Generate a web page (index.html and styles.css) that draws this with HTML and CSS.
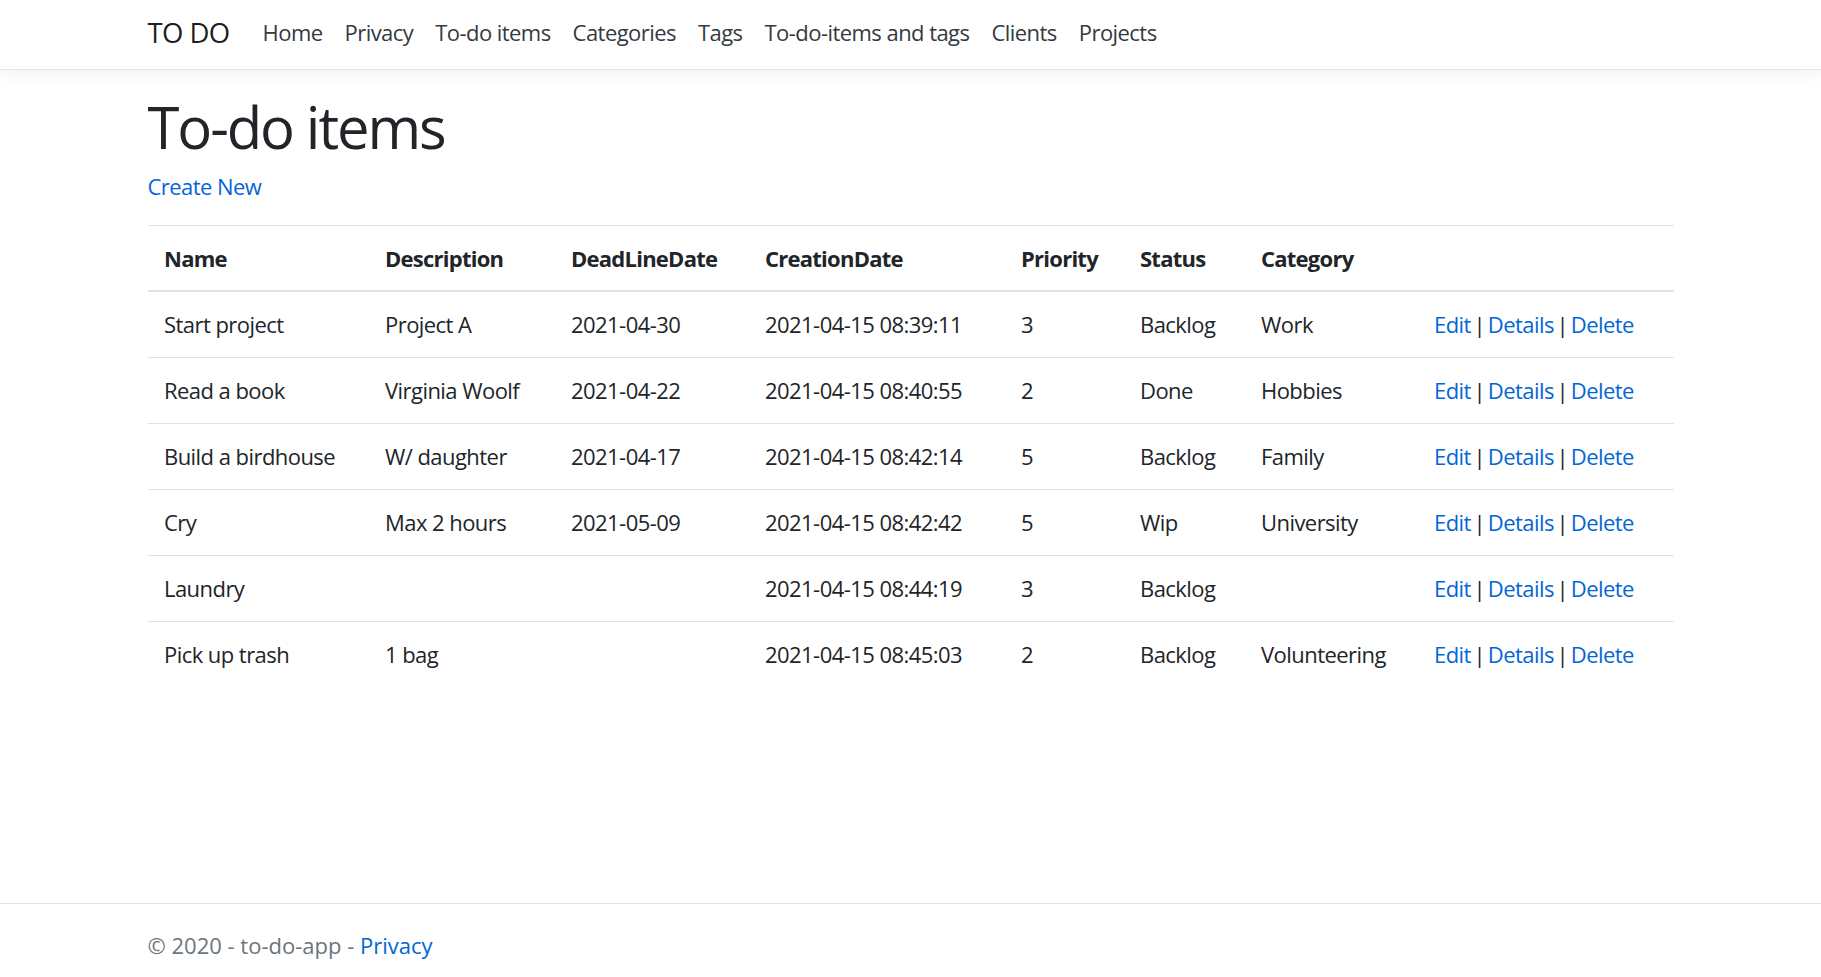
FILE: index.html
```html
<!DOCTYPE html>
<html lang="en">
<head>
<meta charset="utf-8">
<title>To-do items - to-do-app</title>
<link rel="stylesheet" href="styles.css">
</head>
<body>
<header class="navbar">
  <div class="container nav-inner">
    <a class="brand" href="#">TO DO</a>
    <nav class="nav">
      <a class="nav-link" href="#">Home</a>
      <a class="nav-link" href="#">Privacy</a>
      <a class="nav-link" href="#">To-do items</a>
      <a class="nav-link" href="#">Categories</a>
      <a class="nav-link" href="#">Tags</a>
      <a class="nav-link" href="#">To-do-items and tags</a>
      <a class="nav-link" href="#">Clients</a>
      <a class="nav-link" href="#">Projects</a>
    </nav>
  </div>
</header>
<main class="main">
  <div class="container">
    <h1 class="title">To-do items</h1>
    <p class="create"><a href="#">Create New</a></p>
    <table class="table">
      <colgroup>
        <col class="c-name"><col class="c-desc"><col class="c-dead"><col class="c-created"><col class="c-prio"><col class="c-status"><col class="c-cat"><col class="c-actions">
      </colgroup>
      <thead>
        <tr><th>Name</th><th>Description</th><th>DeadLineDate</th><th>CreationDate</th><th>Priority</th><th>Status</th><th>Category</th><th></th></tr>
      </thead>
      <tbody>
        <tr><td>Start project</td><td>Project A</td><td>2021-04-30</td><td>2021-04-15 08:39:11</td><td>3</td><td>Backlog</td><td>Work</td><td class="actions"><a href="#">Edit</a> | <a href="#">Details</a> | <a href="#">Delete</a></td></tr>
        <tr><td>Read a book</td><td>Virginia Woolf</td><td>2021-04-22</td><td>2021-04-15 08:40:55</td><td>2</td><td>Done</td><td>Hobbies</td><td class="actions"><a href="#">Edit</a> | <a href="#">Details</a> | <a href="#">Delete</a></td></tr>
        <tr><td>Build a birdhouse</td><td>W/ daughter</td><td>2021-04-17</td><td>2021-04-15 08:42:14</td><td>5</td><td>Backlog</td><td>Family</td><td class="actions"><a href="#">Edit</a> | <a href="#">Details</a> | <a href="#">Delete</a></td></tr>
        <tr><td>Cry</td><td>Max 2 hours</td><td>2021-05-09</td><td>2021-04-15 08:42:42</td><td>5</td><td>Wip</td><td>University</td><td class="actions"><a href="#">Edit</a> | <a href="#">Details</a> | <a href="#">Delete</a></td></tr>
        <tr><td>Laundry</td><td></td><td></td><td>2021-04-15 08:44:19</td><td>3</td><td>Backlog</td><td></td><td class="actions"><a href="#">Edit</a> | <a href="#">Details</a> | <a href="#">Delete</a></td></tr>
        <tr><td>Pick up trash</td><td>1 bag</td><td></td><td>2021-04-15 08:45:03</td><td>2</td><td>Backlog</td><td>Volunteering</td><td class="actions"><a href="#">Edit</a> | <a href="#">Details</a> | <a href="#">Delete</a></td></tr>
      </tbody>
    </table>
  </div>
</main>
<footer class="footer">
  <div class="container">&copy; 2020 - to-do-app - <a href="#">Privacy</a></div>
</footer>
</body>
</html>
```
FILE: styles.css
```css
* { box-sizing: border-box; }
html, body { margin: 0; padding: 0; }
body {
  font-family: "Open Sans", "Noto Sans", "Liberation Sans", sans-serif;
  font-size: 22px;
  line-height: 33px;
  letter-spacing: -0.55px;
  color: #212529;
  background: #fff;
  min-height: 100vh;
  display: flex;
  flex-direction: column;
}
a { color: #0366d6; text-decoration: none; }
.container { width: 1526px; margin: 0 auto; }

.navbar {
  height: 70px;
  background: #fff;
  border-bottom: 1px solid #e5e5e5;
  box-shadow: 0 5px 16px rgba(0, 0, 0, 0.05);
}
.nav-inner { height: 69px; display: flex; align-items: center; }
.brand {
  font-size: 27.5px;
  line-height: 41px;
  letter-spacing: -0.6px;
  color: rgba(0, 0, 0, 0.9);
  margin-right: 22px;
  padding-bottom: 4px;
}
.nav { display: flex; align-items: center; padding-bottom: 4px; }
.nav-link { padding: 0 11px; color: #343a40; }

.main { flex: 1; padding-top: 22px; }
.title {
  font-size: 58px;
  font-weight: 500;
  line-height: 1.2;
  letter-spacing: -2.1px;
  margin: 0 0 8px;
}
.create { margin: 0 0 22px; }

.table { width: 1526px; border-collapse: collapse; table-layout: fixed; }
.c-name { width: 221px; }
.c-desc { width: 186px; }
.c-dead { width: 194px; }
.c-created { width: 256px; }
.c-prio { width: 119px; }
.c-status { width: 121px; }
.c-cat { width: 173px; }
.c-actions { width: 256px; }
.table th, .table td {
  text-align: left;
  padding: 16px 16.5px;
  border-top: 1px solid #dee2e6;
  vertical-align: top;
  white-space: nowrap;
}
.table th {
  font-weight: 700;
  letter-spacing: -0.75px;
  border-bottom: 2px solid #dee2e6;
  padding-bottom: 15px;
  vertical-align: bottom;
}
.table thead + tbody tr:first-child td { border-top: 0; }
.table .actions { word-spacing: -2.5px; }

.footer {
  border-top: 1px solid #dee2e6;
  height: 74px;
  padding-top: 11px;
  line-height: 60px;
  letter-spacing: 0;
  color: #6c757d;
  white-space: nowrap;
}
```
